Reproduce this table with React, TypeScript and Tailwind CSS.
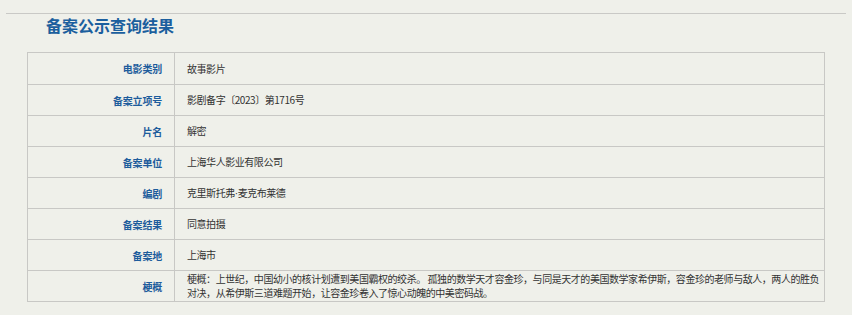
import React from "react";

const rows: [string, React.ReactNode][] = [
  ["电影类别", "故事影片"],
  ["备案立项号", "影剧备字〔2023〕第1716号"],
  ["片名", "解密"],
  ["备案单位", "上海华人影业有限公司"],
  [
    "编剧",
    <>
      克里斯托弗<span style={{ fontFamily: '"Liberation Sans", sans-serif' }}>·</span>麦克布莱德
    </>,
  ],
  ["备案结果", "同意拍摄"],
  ["备案地", "上海市"],
  [
    "梗概",
    "梗概：上世纪，中国幼小的核计划遭到美国霸权的绞杀。 孤独的数学天才容金珍，与同是天才的美国数学家希伊斯，容金珍的老师与敌人，两人的胜负对决，从希伊斯三道难题开始，让容金珍卷入了惊心动魄的中美密码战。",
  ],
];

export default function App() {
  return (
    <div
      className="w-[852px] h-[315px] overflow-hidden bg-[#eff0ea]"
      style={{ fontFamily: '"Noto Sans CJK SC", "Noto Sans", sans-serif' }}
    >
      <div className="pt-[13px] pl-[6px] w-[846px]">
        <div className="border-t border-[#c9c9c6]" />
      </div>
      <div className="pl-[46px] h-[38px] pt-0 text-[16px] leading-[22px] font-bold text-[#1b5f9e]">
        备案公示查询结果
      </div>
      <div className="ml-[27px] w-[798px] border border-[#c8c8c5]">
        {rows.map(([k, v], i) => (
          <div
            key={i}
            className={`flex h-[31px] ${i > 0 ? "border-t border-[#c8c8c5]" : ""}`}
          >
            <div className="w-[147px] shrink-0 border-r border-[#c8c8c5] flex items-center justify-end pr-[12px] text-[10px] tracking-[-0.2px] font-bold text-[#1d5c9c]">
              {k}
            </div>
            <div className="flex-1 flex items-center pl-[12px] pr-[4px] text-[10px] tracking-[-0.45px] leading-[14px] text-[#333333]">
              <span>{v}</span>
            </div>
          </div>
        ))}
      </div>
    </div>
  );
}
